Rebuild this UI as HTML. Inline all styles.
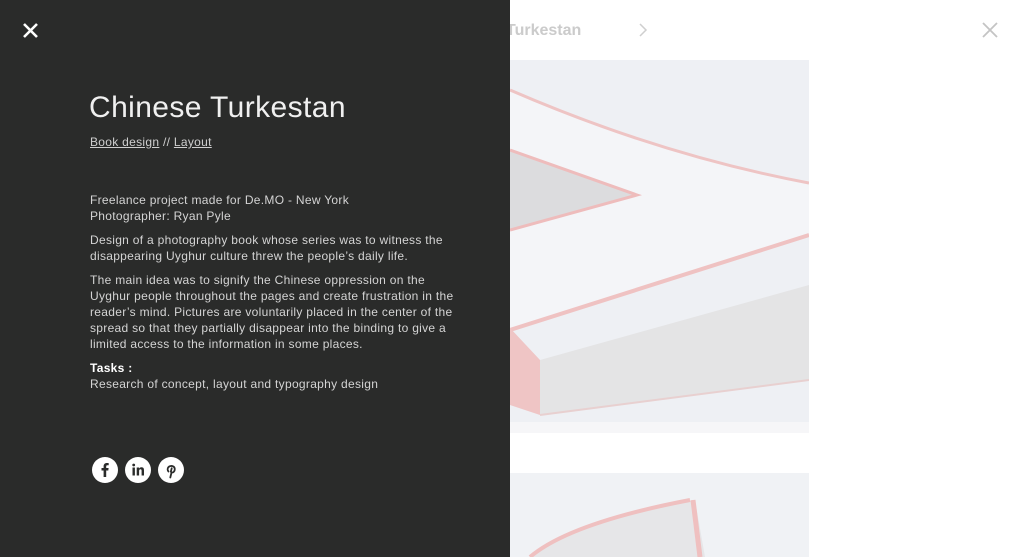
<!DOCTYPE html>
<html><head><meta charset="utf-8"><style>
*{margin:0;padding:0;box-sizing:border-box}
body{width:1020px;height:557px;overflow:hidden;background:#fff;font-family:"Liberation Sans",sans-serif;position:relative}
.hdr{position:absolute;left:506px;top:22px;font-weight:bold;font-size:16px;color:#cbcbcb}
.img{position:absolute;left:510px;width:299px;background:#eef0f4;overflow:hidden}
.panel{position:absolute;left:0;top:0;width:510px;height:557px;background:#2a2b2a;color:#d6d6d6}
h1{position:absolute;left:89px;top:91px;font-weight:normal;font-size:30px;color:#f0f0f0;letter-spacing:0.4px}
.cat{position:absolute;left:90px;top:135px;font-size:12px;color:#cfcfcf;letter-spacing:0.3px}
.txt{position:absolute;left:90px;top:192px;font-size:12px;line-height:16px;color:#d4d4d4;letter-spacing:0.3px;white-space:nowrap}
.txt p{margin-bottom:8px}
.soc{position:absolute;top:457px;width:26px;height:26px;border-radius:50%;background:#fff}
.soc svg{position:absolute;left:0;top:0}
</style></head><body>
<div class="hdr">Turkestan</div>
<svg style="position:absolute;left:636px;top:22px" width="14" height="16"><path d="M4 2 L10 8 L4 14" fill="none" stroke="#cfcfcf" stroke-width="1.5"/></svg>
<svg style="position:absolute;left:981px;top:21px" width="18" height="18"><path d="M2 2L16 16M16 2L2 16" stroke="#c4c4c4" stroke-width="1.8"/></svg>
<div class="img" style="top:60px;height:373px">
<svg width="299" height="373">
<rect width="299" height="373" fill="#eef0f4"/>
<path d="M0 30 Q150 95 299 123 L299 173 L0 270Z" fill="#f4f5f8"/>
<path d="M0 30 Q150 95 299 123" stroke="#eec4c4" stroke-width="3" fill="none"/>
<path d="M0 90 L127 135 L0 170Z" fill="#dcdcde"/>
<path d="M0 90 L127 135 L0 170" stroke="#eebcbc" stroke-width="3" fill="none"/>
<path d="M0 270 L299 175" stroke="#efc2c2" stroke-width="4"/>
<path d="M30 300 L299 225 L299 320 L30 355Z" fill="#e4e4e5"/>
<path d="M0 268 L30 300 L30 355 L0 345Z" fill="#efc5c5"/>
<path d="M30 355 L299 320" stroke="#e8d0d0" stroke-width="2"/>
<rect y="362" width="299" height="11" fill="#f6f6f8"/>
</svg></div>
<div class="img" style="top:473px;height:84px">
<svg width="299" height="84"><rect width="299" height="84" fill="#f0f2f5"/>
<path d="M20 84 Q60 50 185 27 L195 84Z" fill="#e6e6e8"/>
<path d="M20 84 Q60 50 180 27" stroke="#efc0c0" stroke-width="4" fill="none"/>
<path d="M183 27 L190 84" stroke="#efc0c0" stroke-width="5"/></svg></div>
<div class="panel">
<svg style="position:absolute;left:22px;top:22px" width="17" height="17"><path d="M2 2L15 15M15 2L2 15" stroke="#fff" stroke-width="2.6"/></svg>
<h1>Chinese Turkestan</h1>
<div class="cat"><u>Book design</u> // <u>Layout</u></div>
<div class="txt">
<p>Freelance project made for De.MO - New York<br>Photographer: Ryan Pyle</p>
<p>Design of a photography book whose series was to witness the<br>disappearing Uyghur culture threw the people’s daily life.</p>
<p>The main idea was to signify the Chinese oppression on the<br>Uyghur people throughout the pages and create frustration in the<br>reader’s mind. Pictures are voluntarily placed in the center of the<br>spread so that they partially disappear into the binding to give a<br>limited access to the information in some places.</p>
<p><b style="color:#fff">Tasks :</b><br>Research of concept, layout and typography design</p>
</div>
<div class="soc" style="left:92px"><svg width="26" height="26"><path d="M14.2 20V13.5H16.3L16.6 11H14.2V9.5C14.2 8.8 14.4 8.3 15.4 8.3H16.7V6.1C16.5 6.1 15.7 6 14.8 6 12.9 6 11.6 7.2 11.6 9.3V11H9.5V13.5H11.6V20Z" fill="#2a2b2a"/></svg></div>
<div class="soc" style="left:125px"><svg width="26" height="26"><rect x="7.5" y="10.5" width="2.4" height="8" fill="#2a2b2a"/><circle cx="8.7" cy="8" r="1.4" fill="#2a2b2a"/><path d="M11.7 10.5H14V11.6C14.4 10.9 15.3 10.3 16.5 10.3 18.6 10.3 19 11.7 19 13.5V18.5H16.6V14C16.6 13 16.5 12.3 15.5 12.3 14.5 12.3 14.1 13 14.1 14V18.5H11.7Z" fill="#2a2b2a"/></svg></div>
<div class="soc" style="left:158px"><svg width="26" height="26"><path d="M12.3 20.5L13.6 15.2M10.5 14.5C9.5 13.5 9.3 11.8 10.3 10.3 11.4 8.8 14 8.5 15.6 9.6 17.2 10.8 17 13.4 15.9 14.7 14.8 16 13 15.6 12.9 14.4L13.7 11.3" fill="none" stroke="#2a2b2a" stroke-width="1.8" stroke-linecap="round"/></svg></div>
</div>
</body></html>
